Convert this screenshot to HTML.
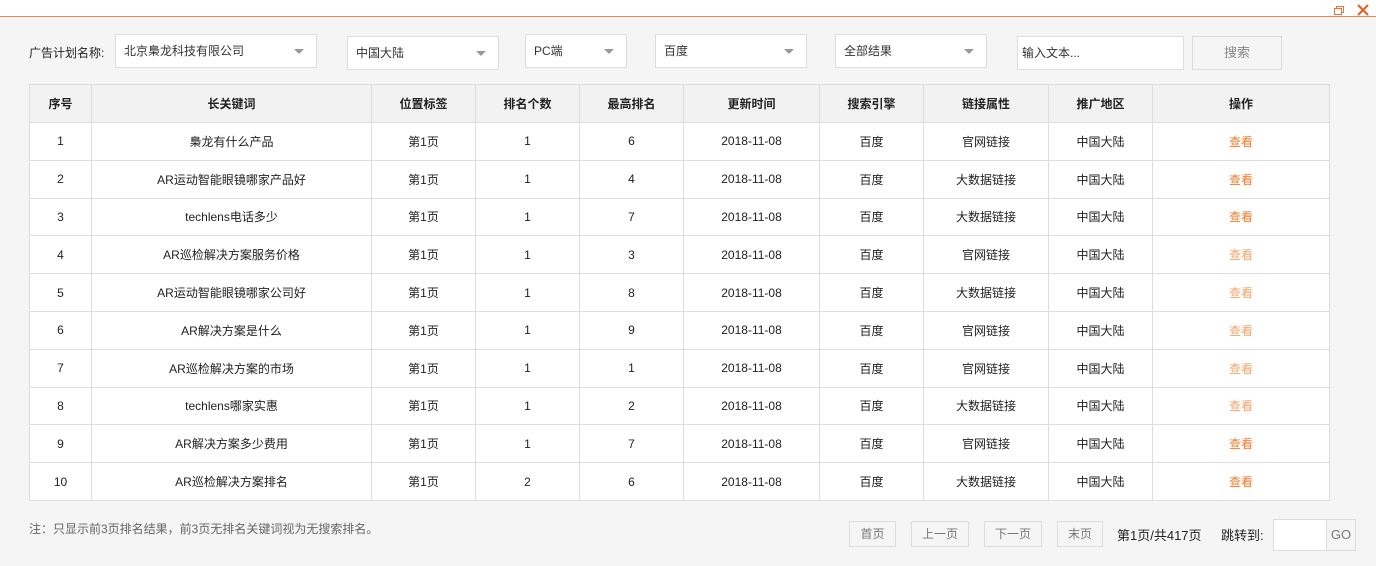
<!DOCTYPE html><html><head><meta charset="utf-8"><style>
*{margin:0;padding:0;box-sizing:border-box}
body{width:1376px;height:566px;background:#f5f5f5;font-family:"Liberation Sans","Noto Sans CJK SC",sans-serif;font-size:12px;color:#222;position:relative;overflow:hidden}
.top{position:absolute;left:0;top:0;width:1376px;height:17px;background:#fff;border-bottom:1px solid #e08a50}
.abs{position:absolute}
.sel{position:absolute;background:#fff;border:1px solid #ddd;height:34px;line-height:32px;padding-left:8px;color:#333}
.sel.dd:after{content:"";position:absolute;right:12px;top:14px;border:5px solid transparent;border-top:5px solid #999;border-bottom:0}
table{position:absolute;left:29px;top:84px;border-collapse:collapse;background:#fff}
td,th{border:1px solid #ddd;text-align:center;height:37.8px;padding:0;font-size:12px}
th{background:#f2f2f2;font-weight:bold;height:38px}
.o{color:#f37b2a}.l{color:#f5a56a}
.btn{position:absolute;top:521px;height:26px;line-height:24px;border:1px solid #ddd;color:#777;text-align:center;background:#f5f5f5}
</style></head><body>
<div class="top"></div>
<svg class="abs" style="left:1333px;top:4px" width="12" height="12"><rect x="1.5" y="4.5" width="7" height="6" fill="none" stroke="#e07a3a"/><path d="M3.5 4.5V2.5H10.5V8.5H8.5" fill="none" stroke="#e07a3a"/></svg>
<svg class="abs" style="left:1356px;top:3px" width="14" height="14"><path d="M2 2L12 12M12 2L2 12" stroke="#e8602a" stroke-width="2.2"/></svg>
<div class="abs" style="left:29px;top:44px">广告计划名称:</div>
<div class="sel dd" style="left:115px;top:34px;width:202px">北京梟龙科技有限公司</div>
<div class="sel dd" style="left:347px;top:36px;width:152px">中国大陆</div>
<div class="sel dd" style="left:525px;top:34px;width:102px">PC端</div>
<div class="sel dd" style="left:655px;top:34px;width:152px">百度</div>
<div class="sel dd" style="left:835px;top:34px;width:152px">全部结果</div>
<div class="sel" style="left:1017px;top:36px;width:167px;padding-left:4px">输入文本...</div>
<div class="abs" style="left:1192px;top:36px;width:90px;height:34px;border:1px solid #ddd;line-height:32px;text-align:center;color:#888;font-size:13px">搜索</div>
<table>
<tr><th style="width:62px">序号</th><th style="width:280px">长关键词</th><th style="width:104px">位置标签</th><th style="width:104px">排名个数</th><th style="width:104px">最高排名</th><th style="width:136px">更新时间</th><th style="width:104px">搜索引擎</th><th style="width:125px">链接属性</th><th style="width:104px">推广地区</th><th style="width:177px">操作</th></tr>
<tr><td>1</td><td>梟龙有什么产品</td><td>第1页</td><td>1</td><td>6</td><td>2018-11-08</td><td>百度</td><td>官网链接</td><td>中国大陆</td><td class="o">查看</td></tr>
<tr><td>2</td><td>AR运动智能眼镜哪家产品好</td><td>第1页</td><td>1</td><td>4</td><td>2018-11-08</td><td>百度</td><td>大数据链接</td><td>中国大陆</td><td class="o">查看</td></tr>
<tr><td>3</td><td>techlens电话多少</td><td>第1页</td><td>1</td><td>7</td><td>2018-11-08</td><td>百度</td><td>大数据链接</td><td>中国大陆</td><td class="o">查看</td></tr>
<tr><td>4</td><td>AR巡检解决方案服务价格</td><td>第1页</td><td>1</td><td>3</td><td>2018-11-08</td><td>百度</td><td>官网链接</td><td>中国大陆</td><td class="l">查看</td></tr>
<tr><td>5</td><td>AR运动智能眼镜哪家公司好</td><td>第1页</td><td>1</td><td>8</td><td>2018-11-08</td><td>百度</td><td>大数据链接</td><td>中国大陆</td><td class="l">查看</td></tr>
<tr><td>6</td><td>AR解决方案是什么</td><td>第1页</td><td>1</td><td>9</td><td>2018-11-08</td><td>百度</td><td>官网链接</td><td>中国大陆</td><td class="l">查看</td></tr>
<tr><td>7</td><td>AR巡检解决方案的市场</td><td>第1页</td><td>1</td><td>1</td><td>2018-11-08</td><td>百度</td><td>官网链接</td><td>中国大陆</td><td class="l">查看</td></tr>
<tr><td>8</td><td>techlens哪家实惠</td><td>第1页</td><td>1</td><td>2</td><td>2018-11-08</td><td>百度</td><td>大数据链接</td><td>中国大陆</td><td class="l">查看</td></tr>
<tr><td>9</td><td>AR解决方案多少费用</td><td>第1页</td><td>1</td><td>7</td><td>2018-11-08</td><td>百度</td><td>官网链接</td><td>中国大陆</td><td class="o">查看</td></tr>
<tr><td>10</td><td>AR巡检解决方案排名</td><td>第1页</td><td>2</td><td>6</td><td>2018-11-08</td><td>百度</td><td>大数据链接</td><td>中国大陆</td><td class="o">查看</td></tr>
</table>
<div class="abs" style="left:29px;top:520px;color:#666">注：只显示前3页排名结果，前3页无排名关键词视为无搜索排名。</div>
<div class="btn" style="left:849px;width:47px">首页</div>
<div class="btn" style="left:911px;width:58px">上一页</div>
<div class="btn" style="left:984px;width:58px">下一页</div>
<div class="btn" style="left:1057px;width:46px">末页</div>
<div class="abs" style="left:1117px;top:525px;font-size:13px">第1页/共417页</div>
<div class="abs" style="left:1221px;top:525px;font-size:13px">跳转到:</div>
<div class="abs" style="left:1273px;top:519px;width:54px;height:32px;background:#fff;border:1px solid #ddd"></div>
<div class="abs" style="left:1326px;top:519px;width:30px;height:32px;border:1px solid #ddd;line-height:30px;text-align:center;color:#777;font-size:13px">GO</div>
</body></html>
